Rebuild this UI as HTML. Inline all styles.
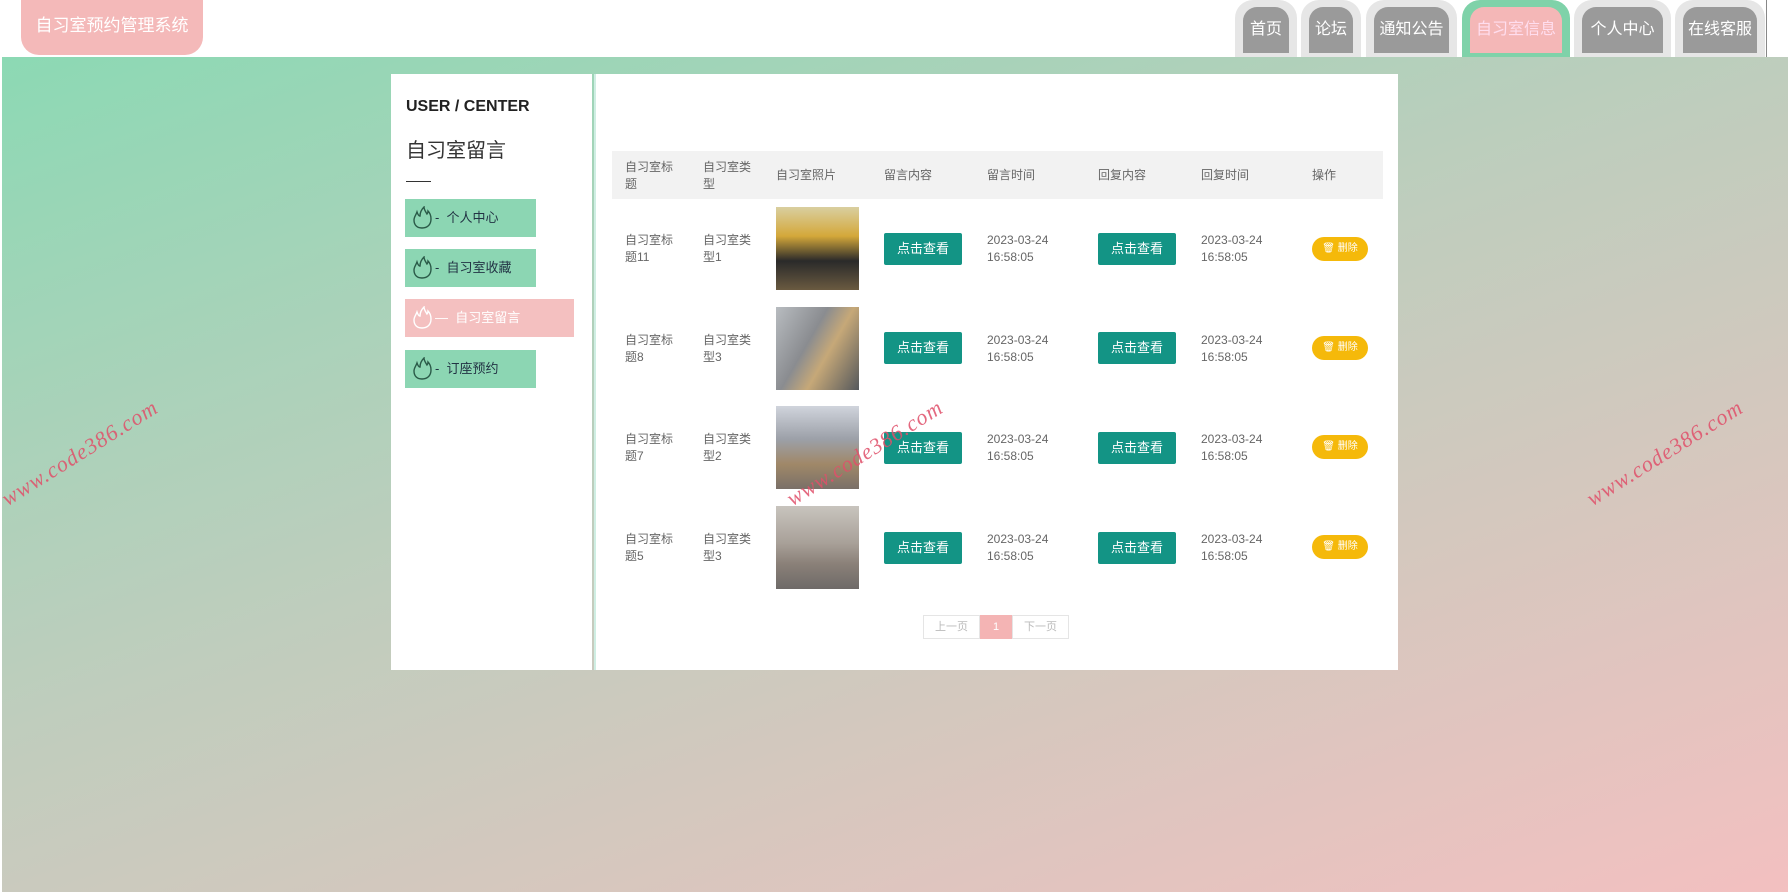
<!DOCTYPE html><html><head><meta charset="utf-8"><style>
*{margin:0;padding:0;box-sizing:border-box}
body{width:1792px;height:892px;overflow:hidden;position:relative;font-family:"Liberation Sans","Noto Sans CJK SC",sans-serif;background:#fff}
.bg{position:absolute;left:2px;top:57px;width:1786px;height:835px;background:linear-gradient(160deg,#8cd9b4 0%,#bfcdbd 45%,#f3c0c0 100%)}
.logo{position:absolute;left:21px;top:0;width:182px;height:55px;background:#f4b9b9;border-radius:0 0 18px 18px;color:#fff;font-size:17px;line-height:52px;text-align:center}
.tab{position:absolute;top:0;height:57px;background:#e6e6e6;border-radius:18px 18px 0 0}
.tab div{position:absolute;left:8px;right:8px;top:7px;height:46px;background:#9a9a9a;border-radius:14px 14px 0 0;color:#fff;font-size:16px;text-align:center;line-height:46px}
.tab.act{background:#7fd2a9}.tab.act div{background:#f4b7b7;color:#fde}
.side{position:absolute;left:391px;top:74px;width:201px;height:596px;background:#fff}
.main{position:absolute;left:594px;top:74px;width:804px;height:596px;background:#fff;border-left:2px solid #cfeee3}
.uc{position:absolute;left:15px;top:24px;font-weight:bold;font-size:16px;color:#222}
.t2{position:absolute;left:15px;top:60px;font-size:20px;color:#333}
.ln{position:absolute;left:15px;top:107px;width:25px;border-top:1px solid #333}
.mi{position:absolute;left:14px;width:131px;height:38px;background:#8cd6b3;font-size:13px;color:#234;line-height:38px;padding-left:30px}
.mi svg{position:absolute;left:6px;top:7px}
.mi.p{background:#f4c0c0;color:#fff}
.th{position:absolute;left:16px;top:77px;width:771px;height:48px;background:#f2f2f2}
.c{position:absolute;font-size:12px;color:#666;line-height:17px}
.img{position:absolute;width:83px;height:83px}
.btn{position:absolute;width:78px;height:32px;background:#139485;color:#fff;font-size:13px;text-align:center;line-height:32px;border-radius:2px}
.del{position:absolute;width:56px;height:24px;background:#f5b90a;border-radius:12px;color:#fff;font-size:10px;line-height:24px;text-align:center}
.pg{position:absolute;top:541px;height:24px;border:1px solid #e5e5e5;font-size:11px;color:#bbb;text-align:center;line-height:22px}
.wm{position:absolute;color:#e0506a;font-family:"Liberation Serif",serif;font-size:22px;transform:rotate(-32deg);font-style:italic;letter-spacing:1px;opacity:.85}
</style></head><body>
<div class="bg"></div>
<div class="logo">自习室预约管理系统</div>
<div class="tab" style="left:1235px;width:62px"><div>首页</div></div>
<div class="tab" style="left:1301px;width:60px"><div>论坛</div></div>
<div class="tab" style="left:1366px;width:91px"><div>通知公告</div></div>
<div class="tab act" style="left:1462px;width:108px"><div>自习室信息</div></div>
<div class="tab" style="left:1574px;width:97px"><div>个人中心</div></div>
<div class="tab" style="left:1675px;width:90px"><div>在线客服</div></div>
<div style="position:absolute;left:1766px;top:0;width:1px;height:57px;background:#888"></div>
<div class="side">
<div class="uc">USER / CENTER</div><div class="t2">自习室留言</div><div class="ln"></div>
<div class="mi" style="top:125px"><svg width="22" height="24" viewBox="0 0 22 24" fill="none" stroke="#2a5a48" stroke-width="1.4"><path d="M11 22c-5 0-8-3-8-8 0-3 2-5 3-8 1 3 2 4 3 4 0-3 1-6 4-9 0 3 2 5 3 7 1-1 1-2 1-3 2 2 3 5 3 8 0 6-4 9-9 9z"/></svg>-&nbsp; 个人中心</div>
<div class="mi" style="top:175px"><svg width="22" height="24" viewBox="0 0 22 24" fill="none" stroke="#2a5a48" stroke-width="1.4"><path d="M11 22c-5 0-8-3-8-8 0-3 2-5 3-8 1 3 2 4 3 4 0-3 1-6 4-9 0 3 2 5 3 7 1-1 1-2 1-3 2 2 3 5 3 8 0 6-4 9-9 9z"/></svg>-&nbsp; 自习室收藏</div>
<div class="mi p" style="top:225px;width:169px"><svg width="22" height="24" viewBox="0 0 22 24" fill="none" stroke="#fff" stroke-width="1.4"><path d="M11 22c-5 0-8-3-8-8 0-3 2-5 3-8 1 3 2 4 3 4 0-3 1-6 4-9 0 3 2 5 3 7 1-1 1-2 1-3 2 2 3 5 3 8 0 6-4 9-9 9z"/></svg>—&nbsp; 自习室留言</div>
<div class="mi" style="top:276px"><svg width="22" height="24" viewBox="0 0 22 24" fill="none" stroke="#2a5a48" stroke-width="1.4"><path d="M11 22c-5 0-8-3-8-8 0-3 2-5 3-8 1 3 2 4 3 4 0-3 1-6 4-9 0 3 2 5 3 7 1-1 1-2 1-3 2 2 3 5 3 8 0 6-4 9-9 9z"/></svg>-&nbsp; 订座预约</div>
</div>
<div class="main">
<div class="th"></div>
<div class="c" style="left:29px;top:85px">自习室标<br>题</div>
<div class="c" style="left:107px;top:85px">自习室类<br>型</div>
<div class="c" style="left:180px;top:93px">自习室照片</div>
<div class="c" style="left:288px;top:93px">留言内容</div>
<div class="c" style="left:391px;top:93px">留言时间</div>
<div class="c" style="left:502px;top:93px">回复内容</div>
<div class="c" style="left:605px;top:93px">回复时间</div>
<div class="c" style="left:716px;top:93px">操作</div>

<div class="c" style="left:29px;top:158px">自习室标<br>题11</div><div class="c" style="left:107px;top:158px">自习室类<br>型1</div>
<div class="img" style="left:180px;top:133px;background:linear-gradient(180deg,#d9cfa0 0%,#d4a83a 35%,#2a2a2a 65%,#6a5a40 100%)"></div>
<div class="btn" style="left:288px;top:159px">点击查看</div><div class="c" style="left:391px;top:158px">2023-03-24<br>16:58:05</div>
<div class="btn" style="left:502px;top:159px">点击查看</div><div class="c" style="left:605px;top:158px">2023-03-24<br>16:58:05</div>
<div class="del" style="left:716px;top:163px">🗑 删除</div>

<div class="c" style="left:29px;top:258px">自习室标<br>题8</div><div class="c" style="left:107px;top:258px">自习室类<br>型3</div>
<div class="img" style="left:180px;top:233px;background:linear-gradient(120deg,#b8bcc0 0%,#8a8c90 40%,#c6a878 60%,#55585c 100%)"></div>
<div class="btn" style="left:288px;top:258px">点击查看</div><div class="c" style="left:391px;top:258px">2023-03-24<br>16:58:05</div>
<div class="btn" style="left:502px;top:258px">点击查看</div><div class="c" style="left:605px;top:258px">2023-03-24<br>16:58:05</div>
<div class="del" style="left:716px;top:262px">🗑 删除</div>

<div class="c" style="left:29px;top:357px">自习室标<br>题7</div><div class="c" style="left:107px;top:357px">自习室类<br>型2</div>
<div class="img" style="left:180px;top:332px;background:linear-gradient(180deg,#d0d4dc 0%,#9ca0a8 40%,#a08868 70%,#7a7068 100%)"></div>
<div class="btn" style="left:288px;top:358px">点击查看</div><div class="c" style="left:391px;top:357px">2023-03-24<br>16:58:05</div>
<div class="btn" style="left:502px;top:358px">点击查看</div><div class="c" style="left:605px;top:357px">2023-03-24<br>16:58:05</div>
<div class="del" style="left:716px;top:361px">🗑 删除</div>

<div class="c" style="left:29px;top:457px">自习室标<br>题5</div><div class="c" style="left:107px;top:457px">自习室类<br>型3</div>
<div class="img" style="left:180px;top:432px;background:linear-gradient(180deg,#c8c4be 0%,#a8a098 45%,#8a8078 70%,#6e6a68 100%)"></div>
<div class="btn" style="left:288px;top:458px">点击查看</div><div class="c" style="left:391px;top:457px">2023-03-24<br>16:58:05</div>
<div class="btn" style="left:502px;top:458px">点击查看</div><div class="c" style="left:605px;top:457px">2023-03-24<br>16:58:05</div>
<div class="del" style="left:716px;top:461px">🗑 删除</div>

<div class="pg" style="left:327px;width:57px">上一页</div>
<div class="pg" style="left:384px;width:32px;background:#f4b4b4;border-color:#f4b4b4;color:#fff">1</div>
<div class="pg" style="left:416px;width:57px">下一页</div>
</div>
<div class="wm" style="left:-10px;top:440px">www.code386.com</div>
<div class="wm" style="left:775px;top:440px">www.code386.com</div>
<div class="wm" style="left:1575px;top:440px">www.code386.com</div>
</body></html>
